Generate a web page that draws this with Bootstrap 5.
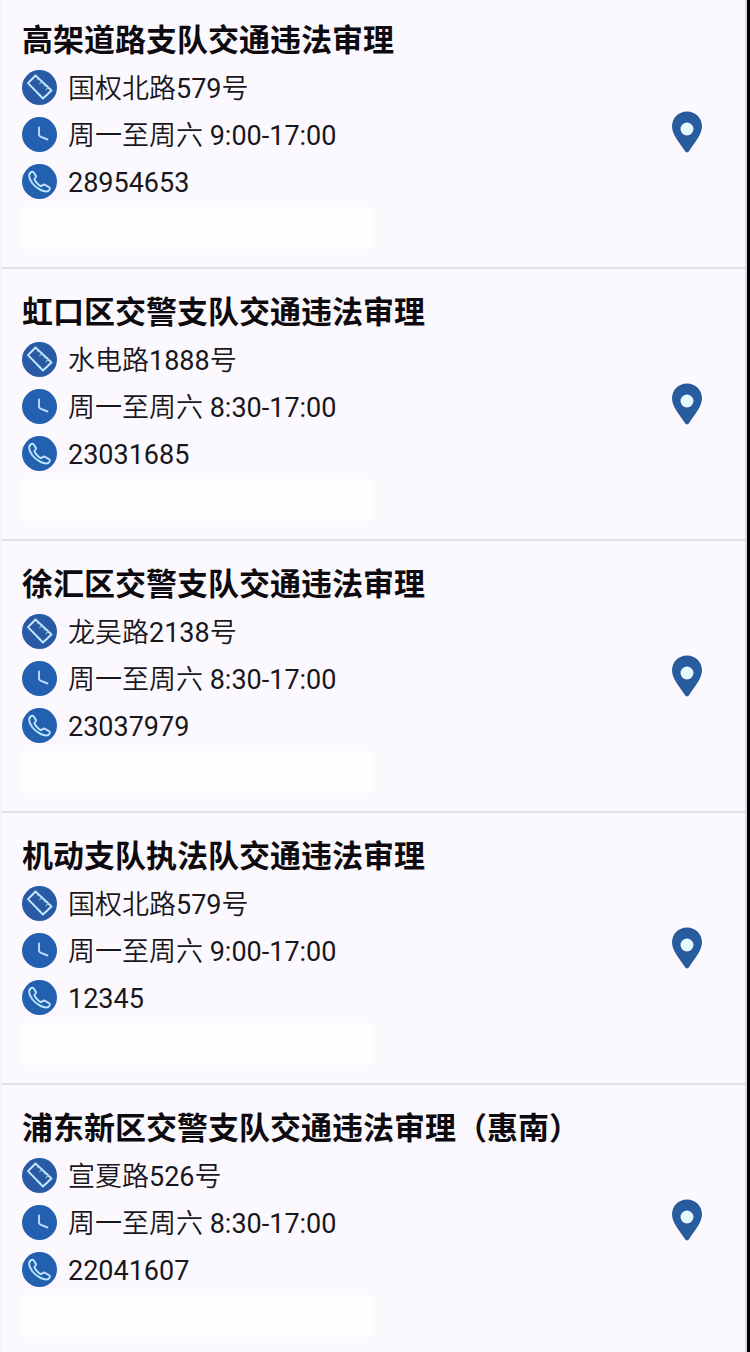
<!DOCTYPE html>
<html lang="zh-CN">
<head>
<meta charset="utf-8">
<meta name="viewport" content="width=device-width, initial-scale=1">
<title>交通违法审理</title>
<link href="https://cdn.jsdelivr.net/npm/bootstrap@5.3.0/dist/css/bootstrap.min.css" rel="stylesheet">
<style>
  body { background: #fcf9fe; color: #19171c; font-family: Roboto, "Noto Sans CJK SC", sans-serif; font-size: 27px; }
  .office-list { border-left: 2px solid #f6f3f9; border-right: 3px solid #000; }
  .office-panel { border-right: 2px solid #dcd9e0; min-height: 100vh; }
  .office { padding: 19px 42px 20px 20px; border-bottom: 2px solid #e0dde3; }
  .office:first-child { padding-top: 16px; }
  .office:last-child { border-bottom: 0; padding-bottom: 10px; }
  .office-title { font-family: "Noto Sans CJK SC", sans-serif; font-size: 31px; font-weight: 700; line-height: 44px; color: #0d0b10; margin-bottom: 4px; }
  .office-row { height: 47px; gap: 11px; line-height: 43px; }
  .office-row svg { width: 35px; height: 35px; }
  .office-row a { color: inherit; }
  .office-text { padding-top: 4px; }
  .office-cjk { font-family: "Noto Sans CJK SC", sans-serif; font-weight: 350; line-height: 1; }
  .office-note { height: 38px; width: 352px; margin-top: 4px; background: #fffeff; border-radius: 4px; box-shadow: 0 0 4px #fffeff; }
  .pin-btn svg { width: 32px; height: 42px; display: block; }
</style>
</head>
<body>
<svg class="d-none" aria-hidden="true">
  <symbol id="ruler" viewBox="0 0 35 35">
    <circle cx="17.500" cy="17.500" r="17.500" fill="#285ba3"/>
    <g fill="none" stroke="#c8eaff" stroke-width="1.900" stroke-linejoin="round" stroke-linecap="round">
      <path d="M13.500 5.500 29.500 20.500 21 28.500 6 13.200Z"/>
      <path d="m16.500 8.700-1 1M19.700 11.700l-2 2M22.800 14.700l-1 1M26 17.700l-2 2" stroke-width="1.200" stroke="#8fc3ee"/>
    </g>
  </symbol>
  <symbol id="clock" viewBox="0 0 35 35">
    <circle cx="17.500" cy="17.500" r="17.500" fill="#2460b0"/>
    <path d="M17 10.500V17.500Q17 19 18.500 19.700L25.500 22.500" fill="none" stroke="#b5e0ff" stroke-width="1.900" stroke-linecap="round"/>
  </symbol>
  <symbol id="phone" viewBox="0 0 35 35">
    <circle cx="17.500" cy="17.500" r="17.500" fill="#2460b0"/>
    <path d="M9.500 7.800C6 9.500 6.500 14.500 10.500 19.500S20.500 27.500 24.500 27.500C27 27.500 28.500 25 27.500 23.500L22.500 20.500C21 20 20 22.500 18.500 22S12.800 17 12.500 15.500 14.500 13.500 14 12L11.700 8.500Q10.800 7.200 9.500 7.800Z" fill="none" stroke="#c0e5ff" stroke-width="1.900" stroke-linejoin="round"/>
  </symbol>
  <symbol id="pin" viewBox="0 0 32 42">
    <path d="M16 0.500C7.400 0.500 1 7 1 15.500 1 23 8 31 13.500 39.500Q16 43.500 18.500 39.500C24 31 31 23 31 15.500 31 7 24.600 0.500 16 0.500Z" fill="#285c9f"/>
    <circle cx="16" cy="18" r="6.500" fill="#e4faff"/>
  </symbol>
</svg>
<main class="office-list">
  <ul class="office-panel list-unstyled mb-0" id="offices"></ul>
</main>
<script src="https://cdn.jsdelivr.net/npm/bootstrap@5.3.0/dist/js/bootstrap.bundle.min.js"></script>
<script>
  const offices = [
    ["高架道路支队交通违法审理", "国权北路579号", "9:00-17:00", "28954653"],
    ["虹口区交警支队交通违法审理", "水电路1888号", "8:30-17:00", "23031685"],
    ["徐汇区交警支队交通违法审理", "龙吴路2138号", "8:30-17:00", "23037979"],
    ["机动支队执法队交通违法审理", "国权北路579号", "9:00-17:00", "12345"],
    ["浦东新区交警支队交通违法审理（惠南）", "宣夏路526号", "8:30-17:00", "22041607"]
  ];
  const icon = name => `<svg class="flex-shrink-0" aria-hidden="true"><use href="#${name}"/></svg>`;
  const light = text => text.replace(/[\u4e00-\u9fff]+/g, '<span class="office-cjk">$&</span>');
  document.getElementById("offices").innerHTML = offices.map(([title, address, hours, phone]) => `
    <li class="office d-flex align-items-center justify-content-between">
      <div>
        <h2 class="office-title">${title}</h2>
        <div class="office-row d-flex align-items-center">${icon("ruler")}<span class="office-text">${light(address)}</span></div>
        <div class="office-row d-flex align-items-center">${icon("clock")}<span class="office-text">${light("周一至周六")} ${hours}</span></div>
        <div class="office-row d-flex align-items-center">${icon("phone")}<a class="office-text text-decoration-none" href="tel:${phone}">${phone}</a></div>
        <div class="office-note"></div>
      </div>
      <button type="button" class="pin-btn btn p-0 border-0 flex-shrink-0" aria-label="地图">${icon("pin")}</button>
    </li>`).join("");
</script>
</body>
</html>
